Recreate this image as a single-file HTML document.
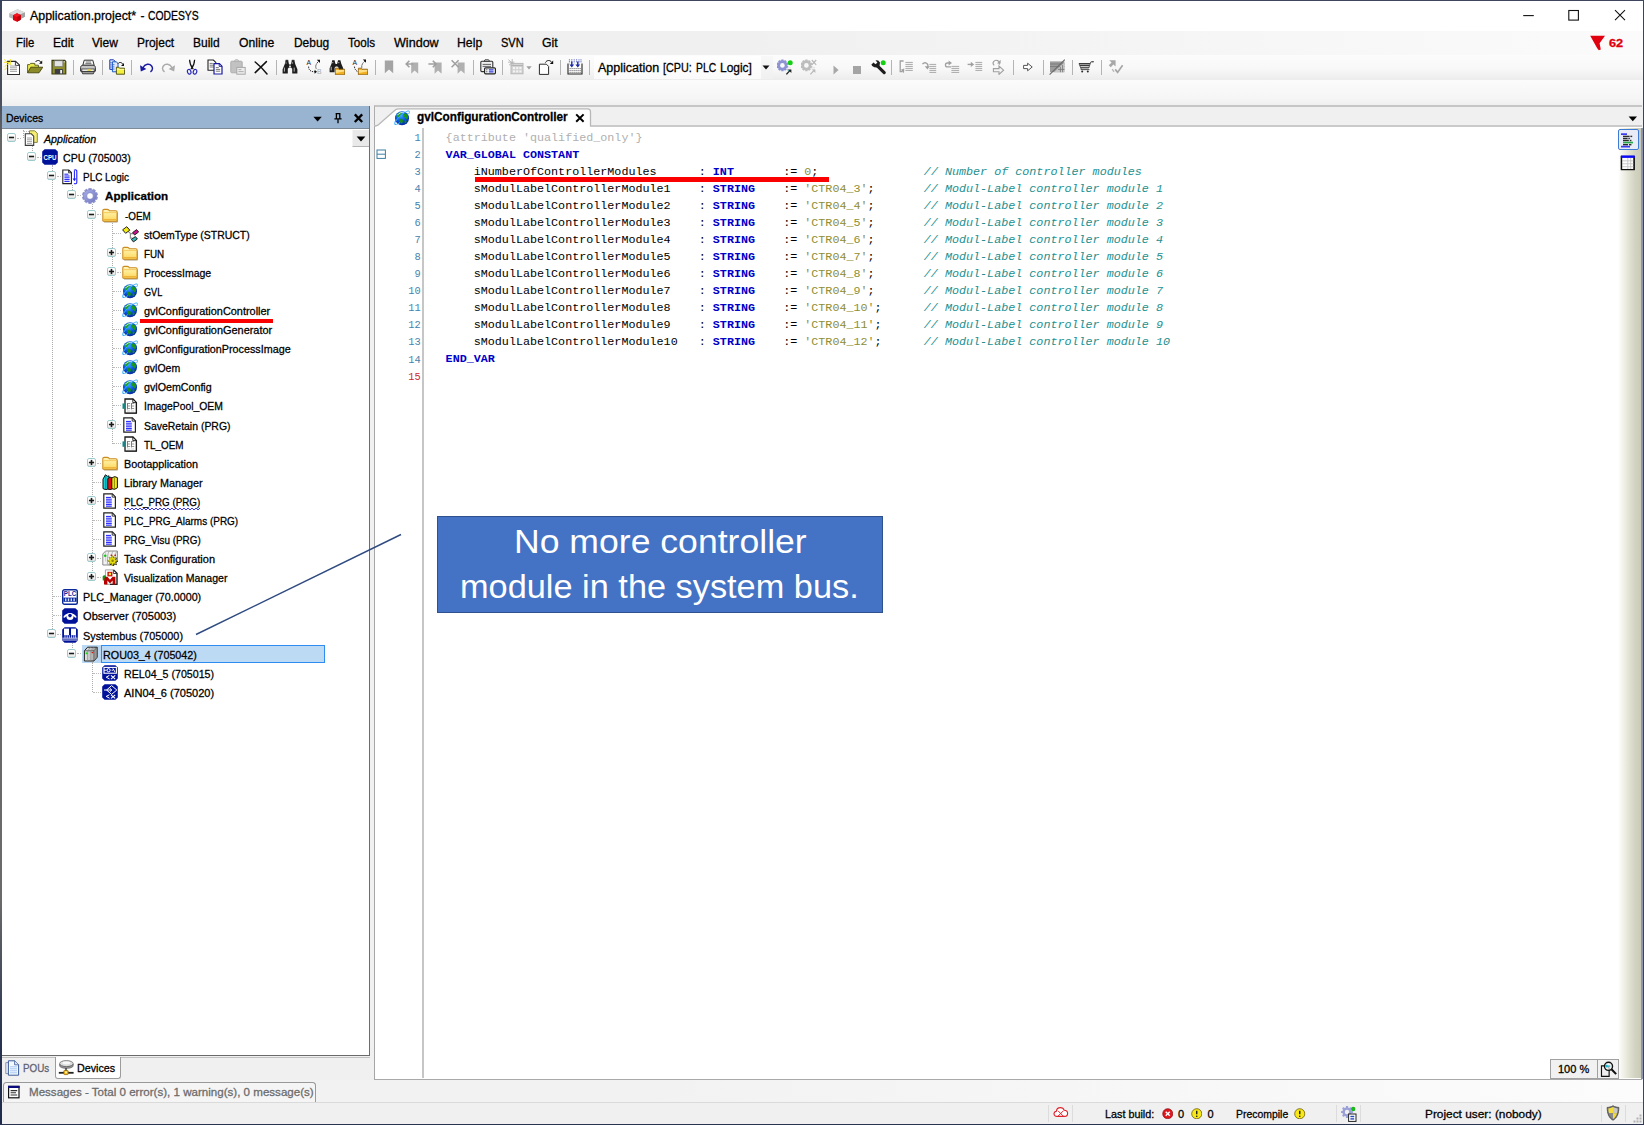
<!DOCTYPE html>
<html lang="en">
<head>
<meta charset="utf-8">
<title>Application.project* - CODESYS</title>
<style>
html,body{margin:0;padding:0;}
body{width:1644px;height:1125px;overflow:hidden;background:#f0f0f0;position:relative;font-family:"Liberation Sans",sans-serif;}
#win{position:absolute;left:0;top:0;width:1644px;height:1125px;overflow:hidden;background:#f0f0f0;}
.a{position:absolute;}
.t{position:absolute;white-space:pre;transform-origin:0 50%;-webkit-text-stroke:0.280px currentColor;line-height:20px;height:20px;font-family:"Liberation Sans",sans-serif;}
.ic{position:absolute;width:16px;height:16px;overflow:visible;}
.sep{position:absolute;width:1px;height:15px;top:60px;background:#b4b4b4;}
.code{position:absolute;white-space:pre;font-family:"Liberation Mono",monospace;font-size:11.72px;line-height:18px;height:18px;left:445.6px;color:#000;}
.ln{position:absolute;white-space:pre;font-family:"Liberation Mono",monospace;font-size:10.300px;line-height:18px;height:18px;width:40px;left:380.600px;text-align:right;color:#4683ad;}
.kw{color:#0000c8;font-weight:bold;}
.st{color:#8e8e34;}
.cm{color:#23908f;font-style:italic;}
.at{color:#b0b0b0;}
.xb{position:absolute;width:7px;height:7px;border:1px solid #9bcacd;border-radius:2px;background:linear-gradient(#fff 0%,#fff 50%,#dedede 100%);box-sizing:content-box;}
.xb:before{content:"";position:absolute;left:0.900px;top:2.600px;width:5.400px;height:1.800px;background:#1a1a1a;}
.xb.p:after{content:"";position:absolute;left:2.700px;top:0.800px;width:1.800px;height:5.400px;background:#1a1a1a;}
.hl{position:absolute;height:0;border-top:1px dotted #bcbcbc;}
.vl{position:absolute;width:0;border-left:1px dotted #acacac;}
</style>
</head>
<body>
<div id="win">
<svg width="0" height="0" style="position:absolute;left:-10px;top:-10px;overflow:hidden">
<defs>
<linearGradient id="gFold" x1="0" y1="0" x2="0" y2="1"><stop offset="0" stop-color="#fff6bc"/><stop offset="0.5" stop-color="#ffe98c"/><stop offset="1" stop-color="#fbd35a"/></linearGradient>
<radialGradient id="gGlobe" cx="0.42" cy="0.32" r="0.75"><stop offset="0" stop-color="#3aa0ff"/><stop offset="0.5" stop-color="#0a58e0"/><stop offset="1" stop-color="#04208a"/></radialGradient>
<linearGradient id="gGear" x1="0" y1="0" x2="1" y2="1"><stop offset="0" stop-color="#a9aee6"/><stop offset="1" stop-color="#7479c2"/></linearGradient>
<linearGradient id="gRou" x1="0" y1="0" x2="1" y2="0"><stop offset="0" stop-color="#e6e6e6"/><stop offset="1" stop-color="#9c9c9c"/></linearGradient>
<linearGradient id="gShield" x1="0" y1="0" x2="1" y2="0"><stop offset="0" stop-color="#8a8a8a"/><stop offset="1" stop-color="#555"/></linearGradient>

<linearGradient id="gXb" x1="0" y1="0" x2="0" y2="1"><stop offset="0" stop-color="#fff"/><stop offset="0.55" stop-color="#fff"/><stop offset="1" stop-color="#d6d6d6"/></linearGradient>
<symbol id="x-minus" viewBox="0 0 9 9">
 <rect x="0.500" y="0.500" width="8" height="8" rx="1.600" fill="url(#gXb)" stroke="#9bcacd" stroke-width="1"/>
 <rect x="1.900" y="3.700" width="5.200" height="1.600" fill="#1a1a1a"/>
</symbol>
<symbol id="x-plus" viewBox="0 0 9 9">
 <rect x="0.500" y="0.500" width="8" height="8" rx="1.600" fill="url(#gXb)" stroke="#9bcacd" stroke-width="1"/>
 <rect x="1.900" y="3.700" width="5.200" height="1.600" fill="#1a1a1a"/>
 <rect x="3.700" y="1.900" width="1.600" height="5.200" fill="#1a1a1a"/>
</symbol>
<!-- title logo -->
<symbol id="i-logo" viewBox="0 0 18 18">
 <path d="M1.200 6.200 L9.600 2.200 17 5.400 17 9.800 9 13.400 1.200 10.200Z" fill="#b4b4b4"/>
 <path d="M1.200 6.200 L9.600 2.200 17 5.400 8.800 9Z" fill="#dcdcdc"/>
 <path d="M8.800 9 L17 5.400 17 9.800 9 13.400Z" fill="#a2a2a2"/>
 <path d="M5 8.200 L9 6.200 12.800 8 12.800 12.800 9 14.800 5 13Z" fill="#e2000f"/>
 <path d="M5 8.200 L9 6.200 12.800 8 9 10Z" fill="#f21822"/>
 <path d="M9 10 L12.800 8 12.800 12.800 9 14.800Z" fill="#bc000a"/>
</symbol>

<!-- ===== tree icons ===== -->
<symbol id="i-project" viewBox="0 0 16 16">
 <path d="M6.5 0.8h5.2l2.6 2.4v9.2H6.5Z" fill="#f6ee70" stroke="#7a7a40" stroke-width="0.9"/>
 <path d="M2.3 3.8h6l2.4 2.4v9.2H2.3Z" fill="#fff" stroke="#3c3c3c" stroke-width="1.1"/>
 <path d="M4 8h5M4 9.8h5M4 11.6h5M4 13.4h5" stroke="#9a9a9a" stroke-width="0.9"/>
</symbol>
<symbol id="i-cpu" viewBox="0 0 16 16">
 <path d="M2.6 0.2h10.8l2.4 2.4v10.8l-2.4 2.4H2.6l-2.4-2.4V2.6Z" fill="#00129a"/>
 <text x="8" y="11" font-family="Liberation Sans, sans-serif" font-size="7.2" font-weight="bold" fill="#fff" text-anchor="middle" textLength="13" lengthAdjust="spacingAndGlyphs">CPU</text>
</symbol>
<symbol id="i-plclogic" viewBox="0 0 16 16">
 <path d="M0.8 1h6l2.6 2.6v11H0.8Z" fill="#fff" stroke="#222" stroke-width="1.1"/>
 <path d="M6.6 1v2.8h2.8" fill="none" stroke="#222" stroke-width="0.9"/>
 <path d="M2.4 5.2h4M2.4 7h5.2M2.4 8.8h5.2M2.4 10.6h5.2M2.4 12.4h5.2" stroke="#1a1aff" stroke-width="1"/>
 <path d="M12 1.2c1.6-0.8 2.8-0.2 2.8 0.8v11.6c0 1.2-1.4 1.6-2.8 0.8" fill="none" stroke="#1a1aff" stroke-width="1.1"/>
 <path d="M12.4 1.6v9" stroke="#1a1aff" stroke-width="1"/>
 <path d="M10.6 9.6h3.6l-1.8 2.6Z" fill="#1a1aff"/>
</symbol>
<symbol id="i-gear" viewBox="0 0 16 16">
 <g fill="url(#gGear)" stroke="#6d72b8" stroke-width="0.400">
  <path id="gtooth" d="M6.700 0.300h2.600l0.300 2.400h-3.200Z"/><use href="#gtooth" transform="rotate(36 8 8)"/><use href="#gtooth" transform="rotate(72 8 8)"/><use href="#gtooth" transform="rotate(108 8 8)"/><use href="#gtooth" transform="rotate(144 8 8)"/><use href="#gtooth" transform="rotate(180 8 8)"/><use href="#gtooth" transform="rotate(216 8 8)"/><use href="#gtooth" transform="rotate(252 8 8)"/><use href="#gtooth" transform="rotate(288 8 8)"/><use href="#gtooth" transform="rotate(324 8 8)"/>
  <circle cx="8" cy="8" r="6.300"/>
 </g>
 <circle cx="8" cy="8" r="6.100" fill="url(#gGear)"/>
 <circle cx="8" cy="8" r="3.300" fill="#fff" stroke="#6d72b8" stroke-width="0.600"/>
</symbol>
<symbol id="i-folder" viewBox="0 0 16 16">
 <path d="M1.300 13.800V4.600c0-0.900 0.500-1.400 1.300-1.400h3c0.800 0 1.200 0.300 1.600 0.800l0.500 0.600h6.400c0.800 0 1.300 0.500 1.300 1.300v7.900c0 0.700-0.400 1-1.100 1H2.400c-0.700 0-1.100-0.300-1.100-1Z" fill="#6e5a2a" opacity="0.600" transform="translate(0.500 0.700)"/>
 <path d="M0.800 13.200V3.800c0-0.900 0.500-1.400 1.300-1.400h3.200c0.800 0 1.200 0.300 1.600 0.800l0.500 0.600h6.400c0.800 0 1.300 0.500 1.300 1.300v8.100c0 0.700-0.400 1-1.100 1H1.900c-0.700 0-1.100-0.300-1.100-1Z" fill="url(#gFold)" stroke="#cb8c22" stroke-width="1.100"/>
 <path d="M1.400 5.600h13.200" stroke="#f0c050" stroke-width="0.800"/>
 <path d="M1.600 12.600h12.800" stroke="#efb538" stroke-width="1.200"/>
</symbol>
<symbol id="i-struct" viewBox="0 0 16 16" overflow="visible">
 <path d="M6.200 5.400 L8.400 7.400 V12.200 H10.600 M8.400 7.600 H11" fill="none" stroke="#8e8e8e" stroke-width="1.200"/>
 <path d="M0.600 3.800 L4.800 0.700 7.800 4.200 3.600 7.300Z" fill="#f4ec10" stroke="#222" stroke-width="1"/>
 <path d="M10.600 6.600 L14.600 3.600 16.600 6 12.600 9Z" fill="#c8108a" stroke="#222" stroke-width="1"/>
 <path d="M9.400 13.400 L13.400 10.600 15.400 13 11.400 15.900Z" fill="#30b8c0" stroke="#222" stroke-width="1"/>
</symbol>
<symbol id="i-globe" viewBox="0 0 16 16">
 <path d="M2.400 14.400C0.400 15.200 0.200 13 2 10.400" stroke="#38b0ff" stroke-width="1.100" fill="none"/>
 <circle cx="8" cy="8.300" r="7" fill="url(#gGlobe)"/>
 <path d="M2.600 5.600c0.800-1.800 2.600-3.200 4.400-3.600 1 0.200 0.800 1.200 0 1.800-0.600 0.600-0.200 1.600-1.200 2.400-0.600 0.600-1 1.800-2 1.600-0.800-0.400-1.400-1.200-1.200-2.200Z" fill="#1fa51f"/>
 <path d="M9.800 3.200c1.400-0.200 3 0.800 3.800 2.200 0.600 1.400 0.400 3.200-0.600 3.800-0.800 0.200-1.200-1-2-1.600-1-0.800-1.800-1.600-1.600-2.800 0-0.600 0-1.200 0.400-1.600Z" fill="#1a9a1a"/>
 <path d="M5.800 9c1-0.600 2.400-0.200 3 1 0.400 1.200-0.200 2.800-1.200 3.400-1-0.200-1.400-1.200-1.800-2.200-0.400-0.800-0.600-1.600 0-2.200Z" fill="#169016"/>
 <path d="M11 10.800c0.600-0.400 1.600-0.200 1.600 0.800 0 0.800-0.800 1.800-1.600 1.600-0.600-0.600-0.600-1.800 0-2.400Z" fill="#148a14"/>
 <path d="M3.400 5.200C5.200 2.800 7.800 2 10 2.800" stroke="#e8f4ff" stroke-width="1" fill="none" opacity="0.900"/>
 <path d="M1.800 11C4 7.600 8.400 3.600 12.400 1.600c2-1 3.600-0.800 3 0.800-0.200 0.600-0.600 1.200-1 1.800" stroke="#38b0ff" stroke-width="1" fill="none"/>
 <path d="M2.400 14.400c1.200-0.400 2.400-1 3.600-1.800" stroke="#38b0ff" stroke-width="1" fill="none"/>
</symbol>
<symbol id="i-imgpool" viewBox="0 0 16 16">
 <path d="M3 1h8l3.400 3.400v10.800H3Z" fill="#fff" stroke="#1a1a1a" stroke-width="1.300"/>
 <path d="M3.600 15.200h10.800V5" fill="none" stroke="#1a1a1a" stroke-width="0.700"/>
 <path d="M10.800 1v3.600h3.600" fill="none" stroke="#1a1a1a" stroke-width="0.900"/>
 <rect x="0.500" y="5.400" width="2.400" height="5.400" fill="#148888"/>
 <g stroke="#7a7a7a" stroke-width="1"><path d="M5.500 5v6.400M9.500 5v6.400"/></g>
 <g stroke="#8e8e8e" stroke-width="0.900"><path d="M5.500 5.500h2.700M5.500 8h2.700M5.500 10.500h2.700M9.500 5.500h2.700M9.500 8h2.700M9.500 10.500h2.700"/></g>
 <g stroke="#c4c4c4" stroke-width="0.800"><path d="M5 13h3.200M9 13h3.200"/></g>
</symbol>
<symbol id="i-prg" viewBox="0 0 16 16">
 <path d="M1.8 0.9h8.6l3 3v11.2H1.8Z" fill="#fff" stroke="#222" stroke-width="1.2"/>
 <path d="M10.2 0.9v3.2h3.2" fill="none" stroke="#222" stroke-width="0.9"/>
 <path d="M4 4.4h5M4 6.2h5.8M4 8h5.8M4 9.8h5.8M4 11.6h5.8M4 13.2h5.8" stroke="#1a1aff" stroke-width="1"/>
</symbol>
<symbol id="i-libmgr" viewBox="0 0 16 16">
 <path d="M1 5.200L3.400 0.800l2.400 1.600 1.200-0.600v12.600l-3 1.400-3-1.200Z" fill="#18d0d8" stroke="#111" stroke-width="1"/>
 <path d="M3.800 1.200v14" stroke="#0a6a70" stroke-width="0.800"/>
 <path d="M5.800 4.600l2.400-1.400 2.200 0.800v10.800l-2.400 1-2.200-0.800Z" fill="#e01010" stroke="#111" stroke-width="1"/>
 <path d="M9.800 4l2.800-1.400 2.800 1v10.200l-3 1.600-2.600-0.800Z" fill="#f4e810" stroke="#111" stroke-width="1"/>
 <path d="M12.400 3.200v12" stroke="#7a7400" stroke-width="0.800"/>
</symbol>
<symbol id="i-taskcfg" viewBox="0 0 16 16">
 <path d="M0.800 4L3.600 1H15.400V11.400L12.400 15H0.800Z" fill="#f2f2f2" stroke="#8a8a8a" stroke-width="1"/>
 <path d="M3.600 1v10.400M0.800 4" stroke="#bbb" stroke-width="0.700" fill="none"/>
 <path d="M7.400 1C6 3 5.400 5 5.400 14.600M11.200 1C9.800 3 9.200 5 9.200 14.600M15 1.400C13.400 3 12.800 5 12.800 14.400" stroke="#9a9a9a" stroke-width="0.800" fill="none"/>
 <circle cx="3.200" cy="5.800" r="1.300" fill="#18c818"/>
 <rect x="8.600" y="4.600" width="1.600" height="1.400" fill="#c02020"/><rect x="12.400" y="4.600" width="1.600" height="1.400" fill="#c02020"/>
 <path d="M10.60 5.50 L11.71 8.12 L14.35 7.05 L13.28 9.69 L15.90 10.80 L13.28 11.91 L14.35 14.55 L11.71 13.48 L10.60 16.10 L9.49 13.48 L6.85 14.55 L7.92 11.91 L5.30 10.80 L7.92 9.69 L6.85 7.05 L9.49 8.12Z" fill="#1a1a1a" transform="translate(0.700 0.700)"/>
 <path d="M10.60 5.50 L11.71 8.12 L14.35 7.05 L13.28 9.69 L15.90 10.80 L13.28 11.91 L14.35 14.55 L11.71 13.48 L10.60 16.10 L9.49 13.48 L6.85 14.55 L7.92 11.91 L5.30 10.80 L7.92 9.69 L6.85 7.05 L9.49 8.12Z" fill="#e4dc10" stroke="#6a6400" stroke-width="0.400"/>
 <circle cx="10.600" cy="10.800" r="1.200" fill="#8a8400"/>
</symbol>
<symbol id="i-vismgr" viewBox="0 0 16 16">
 <path d="M3.400 0.900h8.200l3.400 3.400v11H3.400Z" fill="#fff" stroke="#9a9a9a" stroke-width="0.900"/>
 <path d="M11.600 0.900l3.400 3.400v11H8" fill="none" stroke="#222" stroke-width="1.300"/>
 <path d="M11.400 0.900v3.600h3.600" fill="none" stroke="#333" stroke-width="0.900"/>
 <rect x="5.400" y="2.800" width="5" height="4.600" fill="#c81010"/>
 <rect x="6.800" y="3.800" width="2.200" height="2.400" fill="#ffe428"/>
 <path d="M2 7.800h3.400l2.600 3 2.600-3h2.800V15.600h-2.800v-4l-2.600 2.800-2.600-2.800v4H2Z" fill="#b80000"/>
 <path d="M0.600 7.400c0.800-1.200 2.600-1.400 3.600-0.400L2.400 9.600v2H0.800Z" fill="#169016"/>
</symbol>
<symbol id="i-plcmgr" viewBox="0 0 16 16">
 <rect x="0.7" y="0.7" width="14.6" height="14.6" rx="1.8" fill="#fff" stroke="#0a2a9a" stroke-width="1.4"/>
 <text x="8" y="7.2" font-family="Liberation Sans, sans-serif" font-size="6.6" font-weight="bold" fill="#0a2a9a" text-anchor="middle" textLength="12.4" lengthAdjust="spacingAndGlyphs">PLC</text>
 <rect x="1.4" y="8.6" width="13.2" height="4.2" fill="#0a2a9a"/>
 <g fill="#cfd8ff"><rect x="3" y="9.4" width="1.4" height="2.8"/><rect x="5.8" y="9.4" width="1.4" height="2.8"/><rect x="8.6" y="9.4" width="1.4" height="2.8"/><rect x="11.4" y="9.4" width="1.4" height="2.8"/></g>
</symbol>
<symbol id="i-observer" viewBox="0 0 16 16">
 <path d="M2.600 0.200h10.800l2.400 2.400v10.800l-2.400 2.400H2.600l-2.400-2.400V2.600Z" fill="#00129a"/>
 <path d="M1.200 9.200C3.600 4 12.400 4 14.800 9.200L13.200 9.800C11.400 6.600 4.600 6.600 2.800 9.800Z" fill="#fff"/>
 <circle cx="8" cy="8.400" r="3.500" fill="#fff"/>
 <circle cx="8" cy="7.600" r="1.800" fill="#00129a"/>
</symbol>
<symbol id="i-sysbus" viewBox="0 0 16 16">
 <path d="M2.6 0.2h10.8l2.400 2.400v10.800l-2.400 2.400H2.600l-2.400-2.400V2.600Z" fill="#00129a"/>
 <rect x="2" y="1.6" width="5" height="6.600" fill="#fff"/><rect x="9" y="1.600" width="5" height="6.600" fill="#fff"/>
 <g stroke="#cfd8ff" stroke-width="0.9"><path d="M3 8.200v3M5.200 8.200v3M7.400 8.200v3M9.600 8.200v3M11.800 8.200v3M13.600 8.200v3"/></g>
 <path d="M0.400 11.200h15.200M0.400 13h15.200" stroke="#fff" stroke-width="0.8"/>
</symbol>
<symbol id="i-rou" viewBox="0 0 16 16">
 <path d="M2.400 4.800L5.600 1.200H15.200V11.200L12 15H2.400Z" fill="url(#gRou)" stroke="#222" stroke-width="1"/>
 <path d="M2.400 4.800H12V15M12 4.800L15.200 1.200" fill="none" stroke="#444" stroke-width="0.800"/>
 <path d="M5.600 4.800V15M8.800 4.800V15M8.800 1.200L5.600 4.800M12 1.200L8.800 4.800" stroke="#8a8a8a" stroke-width="0.700" fill="none"/>
 <path d="M12 4.800L15.200 1.200V11.200L12 15Z" fill="#8a8a8a" opacity="0.550"/>
 <rect x="3.600" y="6.400" width="2" height="1.800" fill="#18d818"/>
 <rect x="9.600" y="6" width="1.800" height="1.200" fill="#d81818"/>
</symbol>
<symbol id="i-rel" viewBox="0 0 16 16">
 <path d="M2.600 0.200h10.800l2.400 2.400v10.800l-2.400 2.400H2.600l-2.400-2.400V2.600Z" fill="#00129a"/>
 <rect x="2" y="2.400" width="12.400" height="5.800" fill="none" stroke="#fff" stroke-width="1.100"/>
 <path d="M2 5.200h2.600M9.600 5.200h1.400M10.800 3.400l2.200 3.600" stroke="#fff" stroke-width="1" fill="none"/>
 <circle cx="6.600" cy="5.200" r="1.600" fill="none" stroke="#fff" stroke-width="1"/>
 <path d="M7.400 10.400L4.200 12.200l3.400 1.800" stroke="#fff" stroke-width="1" fill="none"/>
 <path d="M9 10.400l4.200 3.800M13.200 10.400L9 14.200" stroke="#fff" stroke-width="1.100" fill="none"/>
</symbol>
<symbol id="i-ain" viewBox="0 0 16 16">
 <path d="M2.600 0.200h10.800l2.400 2.400v10.800l-2.400 2.400H2.600l-2.400-2.400V2.600Z" fill="#00129a"/>
 <path d="M9.600 1.600L14.800 6 9.600 10.400 4.600 6Z" fill="none" stroke="#fff" stroke-width="1"/>
 <path d="M2 6h7.600M7.600 4l2.200 2-2.200 2" stroke="#fff" stroke-width="1" fill="none"/>
 <path d="M7.400 10.800L4.200 12.400l3.400 1.800" stroke="#fff" stroke-width="1" fill="none"/>
 <path d="M9 10.800l4.200 3.600M13.200 10.800L9 14.400" stroke="#fff" stroke-width="1.100" fill="none"/>
</symbol>

<!-- ===== misc icons ===== -->
<symbol id="i-pou" viewBox="0 0 16 16">
 <path d="M0.800 2.600h6l3 3v8H0.800Z" fill="#e8f0fb" stroke="#7a8aa6" stroke-width="0.900"/>
 <path d="M3.400 0.800h6.400l3.800 3.800v10.600H3.400Z" fill="#f4f9ff" stroke="#3a5a9a" stroke-width="1"/>
 <path d="M9.600 0.800v4h4" fill="#dbe8fa" stroke="#3a5a9a" stroke-width="0.800"/>
 <path d="M5 6.800h7M5 8.800h7M5 10.800h7M5 12.800h7" stroke="#9cc4f0" stroke-width="0.900"/>
</symbol>
<symbol id="i-devtab" viewBox="0 0 16 16">
 <ellipse cx="8.400" cy="3.600" rx="6.800" ry="3" fill="#dcdcdc" stroke="#6a6a6a" stroke-width="0.800"/>
 <ellipse cx="8.400" cy="3" rx="4" ry="1.400" fill="#f8f8f8"/>
 <path d="M1.600 4.200c0 3.400 13.600 3.400 13.600 0v1.600c0 3.400-13.600 3.400-13.600 0Z" fill="#9a9a9a" stroke="#555" stroke-width="0.600"/>
 <path d="M8 8v3" stroke="#333" stroke-width="1.400"/>
 <path d="M0.800 12.800h14.800" stroke="#222" stroke-width="1.800"/>
 <rect x="5.800" y="10.400" width="4.400" height="4.200" rx="0.800" fill="#f0b818" stroke="#8a5a00" stroke-width="0.700"/>
 <rect x="7" y="11.400" width="2" height="1.800" fill="#fff2a8"/>
</symbol>
<symbol id="i-msg" viewBox="0 0 16 16">
 <rect x="2.600" y="2.400" width="10.400" height="11.400" fill="#fff" stroke="#111" stroke-width="1.200"/>
 <rect x="2" y="1.800" width="11.600" height="2.200" fill="#0a0a7a"/>
 <path d="M4.600 6.600h6.600M4.600 8.800h5.400M4.600 11h6.600" stroke="#333" stroke-width="1.100"/>
</symbol>
<symbol id="i-cloud" viewBox="0 0 16 16">
 <path d="M4 12.400c-1.800 0-3-1.200-3-2.600 0-1.400 1-2.400 2.400-2.600 0.200-2 1.800-3.600 4-3.600 1.800 0 3.200 1 3.800 2.600 2 0 3.400 1.400 3.400 3.200 0 1.600-1.400 3-3.200 3Z" fill="#fff" stroke="#e0202a" stroke-width="1.100"/>
 <path d="M5 6.800l5.400 5.400M10.400 6.800L5 12.200" stroke="#e0202a" stroke-width="1"/>
</symbol>
<symbol id="i-err" viewBox="0 0 13 13">
 <circle cx="6.500" cy="6.500" r="5.700" fill="#e0161e" stroke="#8a0a10" stroke-width="0.800"/>
 <path d="M4.200 4.200l4.600 4.600M8.800 4.200l-4.600 4.600" stroke="#fff" stroke-width="1.600"/>
</symbol>
<symbol id="i-warn" viewBox="0 0 13 13">
 <circle cx="6.500" cy="6.500" r="5.700" fill="#f8e818" stroke="#6a5a00" stroke-width="0.900"/>
 <path d="M6.500 3v4.200" stroke="#111" stroke-width="1.500"/><circle cx="6.500" cy="9.400" r="0.900" fill="#111"/>
</symbol>
<symbol id="i-stgear" viewBox="0 0 16 16">
 <g fill="#9aa0d8"><circle cx="6" cy="6" r="4.600"/><g id="gt2"><rect x="4.900" y="0" width="2.200" height="12" rx="0.500"/></g><use href="#gt2" transform="rotate(45 6 6)"/><use href="#gt2" transform="rotate(90 6 6)"/><use href="#gt2" transform="rotate(135 6 6)"/></g>
 <circle cx="6" cy="6" r="2.200" fill="#f0f0f0"/>
 <circle cx="12.200" cy="3" r="2.200" fill="#18b818"/>
 <rect x="7.600" y="8" width="7.400" height="7.400" fill="#fff" stroke="#222" stroke-width="1"/>
 <rect x="9.400" y="9.800" width="3.800" height="1.400" fill="#2a4ab8"/><rect x="9.400" y="12.200" width="3.800" height="1.400" fill="#2a4ab8"/>
</symbol>
<symbol id="i-shield" viewBox="0 0 16 16">
 <path d="M8 0.800c2 1.200 4 1.600 5.800 1.600 0 6-1.600 10.400-5.800 12.800C3.800 12.800 2.200 8.400 2.200 2.400 4 2.400 6 2 8 0.800Z" fill="#777" stroke="#4a4a4a" stroke-width="0.900"/>
 <path d="M8 2c-1.400 0.800-3 1.200-4.600 1.400 0 1.800 0.200 3.400 0.600 4.800H8Z" fill="#f6dc3a"/>
 <path d="M8 2c1.400 0.800 3 1.200 4.600 1.400 0 1.800-0.200 3.400-0.600 4.800H8Z" fill="#c8c8c8"/>
 <path d="M8 8.200H4c0.800 2.600 2 4.400 4 5.800Z" fill="#8a8a8a"/>
 <path d="M8 8.200h4c-0.800 2.600-2 4.400-4 5.800Z" fill="#f6dc3a"/>
</symbol>
<symbol id="i-zoom" viewBox="0 0 16 16">
 <path d="M1.400 4.600h5.200l2 2v7.800H1.400Z" fill="#eee" stroke="#111" stroke-width="1.100"/>
 <circle cx="8" cy="5" r="3.800" fill="#f4f4f4" fill-opacity="0.7" stroke="#111" stroke-width="1.300"/>
 <path d="M10.800 7.800l4.400 4.600" stroke="#111" stroke-width="1.900"/>
 <path d="M5.600 4.800h4M6.800 3.600l-1.200 1.200 1.200 1.200" stroke="#18b8d0" stroke-width="1" fill="none"/>
</symbol>
<symbol id="i-textview" viewBox="0 0 16 16">
 <rect x="1" y="1.300" width="6" height="1.700" fill="#3a3af0"/>
 <g fill="#2a2a2a"><rect x="3" y="3.700" width="6.600" height="1.400"/><rect x="10.400" y="3.700" width="1.800" height="1.400"/>
 <rect x="3" y="5.800" width="4.600" height="1.400"/><rect x="8.400" y="5.800" width="1.400" height="1.400"/>
 <rect x="3" y="7.800" width="5.800" height="1.400"/><rect x="9.800" y="7.800" width="1.600" height="1.400"/>
 <rect x="3" y="12" width="5" height="1.400"/><rect x="9" y="12" width="2.400" height="1.400"/></g>
 <rect x="3" y="9.700" width="10" height="1.700" fill="#2aa84a"/>
 <rect x="1" y="13.800" width="9" height="1.700" fill="#3a3af0"/>
</symbol>
<symbol id="i-tableview" viewBox="0 0 16 16">
 <rect x="1.500" y="1.600" width="13" height="13.400" fill="#fff" stroke="#111" stroke-width="1.300"/>
 <path d="M1.500 6h13M1.500 9h13M1.500 12h13M8 3v12M11 3v12" stroke="#c4c4c4" stroke-width="0.900"/>
 <rect x="1.500" y="1.600" width="13" height="13.400" fill="none" stroke="#111" stroke-width="1.300"/>
 <rect x="0.900" y="0.500" width="14.200" height="2.400" fill="#0a0aff"/>
</symbol>
<!-- ===== toolbar icons ===== -->
<symbol id="t-new" viewBox="0 0 16 16">
 <path d="M3.6 2.400h8l4 3.800v9.400H3.600Z" fill="#fff" stroke="#2a2a2a" stroke-width="1.100"/>
 <path d="M11.400 2.400v4h4" fill="none" stroke="#2a2a2a" stroke-width="0.900"/>
 <path d="M6 7h7M6 8.800h7M6 10.600h7M6 12.400h7" stroke="#9a9a9a" stroke-width="0.900"/>
 <path d="M0.200 0.400l5.600 5.200M6.400 0v6M0 3.400h6M0.600 7.600l4.400-3.600M0.600 10.600l2.600-2" stroke="#f0e020" stroke-width="0.900"/>
</symbol>
<symbol id="t-open" viewBox="0 0 16 16">
 <path d="M0.600 13.800V5.600h2l1-1.200h4.200v1.800h3.600v2" fill="#e8e850" stroke="#55551a" stroke-width="0.900"/>
 <path d="M0.600 13.800L3.800 8.200H15.800L12 13.800Z" fill="#8a8a28" stroke="#44440f" stroke-width="0.900"/>
 <path d="M8.400 3c1.600-2.200 4.600-2 5.600 0.600" fill="none" stroke="#111" stroke-width="1"/>
 <path d="M15.200 1.600v3.200h-3.200Z" fill="#111"/>
</symbol>
<symbol id="t-save" viewBox="0 0 16 16">
 <path d="M1 1.400h12.800l1 1V15H1Z" fill="#8e8e2e" stroke="#3a3a10" stroke-width="1.100"/>
 <rect x="3.400" y="1.800" width="8.400" height="5.600" fill="#e2e2e2" stroke="#777" stroke-width="0.600"/>
 <rect x="3.800" y="10" width="8" height="5" fill="#3c3c44"/>
 <rect x="9.200" y="11" width="1.800" height="3.400" fill="#f0f0f0"/>
 <rect x="12.800" y="2.200" width="1" height="1.200" fill="#e8e8e8"/>
</symbol>
<symbol id="t-print" viewBox="0 0 16 16">
 <path d="M4.200 1.200h8.600l1.400 5.200H2.800Z" fill="#f4f4f4" stroke="#333" stroke-width="1"/>
 <path d="M5.800 3h5.200M5.400 4.600h6" stroke="#555" stroke-width="0.800"/>
 <path d="M0.600 8.600c0-1.400 1-2.400 2.400-2.400h10c1.400 0 2.400 1 2.400 2.400v3.600H0.600Z" fill="#c4c4c4" stroke="#333" stroke-width="1"/>
 <rect x="1.800" y="10" width="12.400" height="2.400" fill="#fff" stroke="#333" stroke-width="0.800"/>
 <rect x="7.400" y="10.400" width="3.400" height="1.400" fill="#f0e020"/>
 <path d="M1.600 12.400h12.800l-1 2.400H2.600Z" fill="#9a9a9a" stroke="#333" stroke-width="0.900"/>
</symbol>
<symbol id="t-copyfolder" viewBox="0 0 16 16">
 <path d="M0.800 0.800h3.800l1.600 1.600v8H0.800Z" fill="#dfe8ff" stroke="#1a3ab0" stroke-width="1"/>
 <path d="M3.400 2.800h3.800l1.800 1.600v8.400H3.400Z" fill="#dfe8ff" stroke="#1a5ac8" stroke-width="1"/>
 <path d="M2 3v6M4.800 5v6" stroke="#1a3ab0" stroke-width="0.900" stroke-dasharray="0.9 0.9"/>
 <path d="M7.400 8.200h2.400l0.800 1h5v6H7.400Z" fill="#f4f040" stroke="#55551a" stroke-width="1"/>
 <path d="M7.800 10.400h7.600" stroke="#fbfba0" stroke-width="1"/>
 <path d="M9 4.600c1.400-1.800 4-1.400 4.800 0.800" fill="none" stroke="#111" stroke-width="1"/>
 <path d="M15 4v3h-3Z" fill="#111"/>
</symbol>
<symbol id="t-undo" viewBox="0 0 16 16">
 <path d="M4.800 9C7 4.600 11.600 4.200 13.600 7c1.400 2.200 0.600 4.600-1.200 5.800" fill="none" stroke="#1a1aa0" stroke-width="1.400"/>
 <path d="M2 6.200l0.800 6.200 5.600-2.400Z" fill="#1a1aa0"/>
</symbol>
<symbol id="t-redo" viewBox="0 0 16 16">
 <path d="M11.200 9C9 4.600 4.400 4.200 2.400 7 1 9.200 1.800 11.600 3.600 12.800" fill="none" stroke="#ababab" stroke-width="1.400"/>
 <path d="M14 6.200l-0.800 6.200-5.600-2.400Z" fill="#ababab"/>
</symbol>
<symbol id="t-cut" viewBox="0 0 16 16">
 <path d="M5.600 0.800c0 3.600 1 6.200 3.600 9.400M10.600 0.800c0 3.600-1 6.200-3.600 9.400" fill="none" stroke="#111" stroke-width="1.200"/>
 <ellipse cx="5.200" cy="12.800" rx="1.700" ry="2.400" fill="none" stroke="#2828b8" stroke-width="1.200" transform="rotate(-18 5.200 12.800)"/>
 <ellipse cx="11" cy="12.800" rx="1.700" ry="2.400" fill="none" stroke="#2828b8" stroke-width="1.200" transform="rotate(18 11 12.800)"/>
</symbol>
<symbol id="t-copy" viewBox="0 0 16 16">
 <path d="M1 1h5.400l2.400 2.400v7.800H1Z" fill="#fff" stroke="#222" stroke-width="1.100"/>
 <path d="M2.600 4.400h3.200M2.600 6.200h4.200M2.600 8h4.200" stroke="#555" stroke-width="0.800"/>
 <path d="M7 4.600h5.400l2.600 2.600v7.800H7Z" fill="#fff" stroke="#1a1aa0" stroke-width="1.200"/>
 <path d="M12.200 4.600v2.800h2.800" fill="none" stroke="#1a1aa0" stroke-width="0.900"/>
 <path d="M8.800 8.600h3M8.800 10.400h4.400M8.800 12.200h4.400" stroke="#555" stroke-width="0.800"/>
</symbol>
<symbol id="t-paste" viewBox="0 0 16 16">
 <rect x="0.800" y="2.200" width="11.400" height="11.600" rx="1" fill="#c2c2c2" stroke="#adadad" stroke-width="1"/>
 <path d="M4 2.600l1.400-1.800h2.400l1.400 1.800Z" fill="#d8d8d8" stroke="#adadad" stroke-width="0.900"/>
 <rect x="6.800" y="8.400" width="8.400" height="6.800" fill="#ececec" stroke="#a8a8a8" stroke-width="1"/>
 <path d="M8.400 10.600h3M8.400 12.600h5.200" stroke="#a8a8a8" stroke-width="0.900"/>
</symbol>
<symbol id="t-del" viewBox="0 0 16 16">
 <path d="M2.200 3C6 6 10 10 14 15M13.400 2.600C10 6 6 10 2.200 13.600" fill="none" stroke="#111" stroke-width="1.500" stroke-linecap="round"/>
</symbol>
<symbol id="t-find" viewBox="0 0 16 16">
 <path d="M3.600 1.600h2.600l0.600 3 0.400 1h1.600l0.400-1 0.600-3h2.600l0.800 3.400 2.200 5.200v4.200H10.200V9.800L9 8.600H7L5.800 9.800v4.600H0.600v-4.200L2.800 5Z" fill="#1e1e1e"/>
 <rect x="3.600" y="0.800" width="2.600" height="1.400" fill="#333"/><rect x="9.800" y="0.800" width="2.600" height="1.400" fill="#333"/>
 <path d="M2.400 8.600v4M12.200 8.600v4M4 3.400v1.200M10.600 3.400v1.200" stroke="#c8c8c8" stroke-width="0.900"/>
 <rect x="7" y="6.600" width="2" height="1.600" fill="#cfcfcf"/>
</symbol>
<symbol id="t-replace" viewBox="0 0 16 16">
 <text x="0.400" y="6" font-family="Liberation Sans, sans-serif" font-size="6.800" fill="#222">A</text>
 <text x="11" y="15.200" font-family="Liberation Sans, sans-serif" font-size="6.800" fill="#a8a8a8">B</text>
 <path d="M2.600 7.600c0 3.600 2 5.200 6.400 5.200" fill="none" stroke="#222" stroke-width="1" stroke-dasharray="1.200 0.900"/>
 <path d="M8.600 10.800l2.400 2-2.400 2Z" fill="#111"/>
 <path d="M10.200 9.600c-1.200-2.400 0-5.200 2.800-7.600" fill="none" stroke="#222" stroke-width="1" stroke-dasharray="1.200 0.900"/>
 <path d="M10.800 0.800h3.200v3.200Z" fill="#111"/>
</symbol>
<symbol id="t-findfiles" viewBox="0 0 16 16">
 <path d="M3.200 1.200h2.400l0.600 2.800 0.400 1h1.400l0.400-1 0.600-2.800h2.400l0.800 3.200 2 4.800v4H9.600V8.800L8.400 7.600H6.800L5.600 8.800v4.400H0.600v-4L2.600 4.400Z" fill="#1e1e1e"/>
 <path d="M2.200 7.800v3.600M3.800 3v1.200M9.800 3v1.200" stroke="#c8c8c8" stroke-width="0.900"/>
 <path d="M6.400 9.200h2.800l0.800 1h5.600v5.600H6.400Z" fill="#f0b020" stroke="#8a5a10" stroke-width="0.800"/>
 <path d="M6.800 11h8.400v1.600L6.800 14Z" fill="#ffe89a" opacity="0.850"/>
</symbol>
<symbol id="t-replfiles" viewBox="0 0 16 16">
 <text x="0.400" y="6" font-family="Liberation Sans, sans-serif" font-size="6.800" fill="#222">A</text>
 <path d="M2.400 7.600c0.400 3 1.800 4.600 4.400 5.600" fill="none" stroke="#222" stroke-width="1" stroke-dasharray="1.200 0.900"/>
 <path d="M9.800 8.600c-0.400-2.400 0.800-4.600 3-6.600" fill="none" stroke="#222" stroke-width="1" stroke-dasharray="1.200 0.900"/>
 <path d="M10.800 0.600h3.200v3.200Z" fill="#111"/>
 <path d="M6.400 9.200h2.800l0.800 1h5.600v5.600H6.400Z" fill="#f0b020" stroke="#8a5a10" stroke-width="0.800"/>
 <path d="M6.800 11h8.400v1.600L6.800 14Z" fill="#ffe89a" opacity="0.850"/>
</symbol>
<symbol id="t-bm" viewBox="0 0 16 16">
 <path d="M3.800 1.600h8.400v12.600L8 10.600 3.800 14.200Z" fill="#a4a4a4"/>
</symbol>
<symbol id="t-bmprev" viewBox="0 0 16 16">
 <path d="M7.200 3.600h7v11.200L10.600 11.600 7.200 14.800Z" fill="#b0b0b0"/>
 <path d="M2.400 5h7M5.400 1.800L2.200 5l3.200 3.200" fill="none" stroke="#a0a0a0" stroke-width="1.600"/>
</symbol>
<symbol id="t-bmnext" viewBox="0 0 16 16">
 <path d="M7.600 3.600h7v11.200L11 11.600 7.600 14.800Z" fill="#b0b0b0"/>
 <path d="M1.400 5h7M5.800 1.800L9 5 5.800 8.200" fill="none" stroke="#a0a0a0" stroke-width="1.600"/>
</symbol>
<symbol id="t-bmclear" viewBox="0 0 16 16">
 <path d="M7.600 3.600h7v11.200L11 11.600 7.600 14.800Z" fill="#b0b0b0"/>
 <path d="M1.600 1.200l7 7M8.600 1.200l-7 7" fill="none" stroke="#a0a0a0" stroke-width="1.600"/>
</symbol>
<symbol id="t-cliplist" viewBox="0 0 16 16">
 <rect x="0.800" y="2.200" width="12" height="10.400" rx="1" fill="#f0f0f0" stroke="#333" stroke-width="1.100"/>
 <path d="M4 2.400l1-1.600h3.600l1 1.600Z" fill="#ddd" stroke="#333" stroke-width="0.900"/>
 <path d="M2.600 5.400h8.400M2.600 7.400h8.400" stroke="#555" stroke-width="0.900"/>
 <rect x="4.600" y="8.800" width="10.800" height="6" rx="1" fill="#fff" stroke="#222" stroke-width="1.200"/>
 <path d="M6.200 10.800h1.200M6.200 12.800h1.200" stroke="#333" stroke-width="1"/>
 <path d="M8.800 10.800h4.800M8.800 12.800h4.800" stroke="#2a3ad0" stroke-width="1.200"/>
</symbol>
<symbol id="t-newobj" viewBox="0 0 16 16">
 <rect x="3" y="4.400" width="12" height="10.400" fill="#d4d4d4" stroke="#b8b8b8" stroke-width="1"/>
 <path d="M3 6.600h12" stroke="#b0b0b0" stroke-width="1"/>
 <g fill="#f4f4f4"><rect x="5" y="8" width="2" height="2"/><rect x="8.200" y="8" width="2" height="2"/><rect x="11.400" y="8" width="2" height="2"/><rect x="5" y="11.400" width="2" height="2"/><rect x="8.200" y="11.400" width="2" height="2"/><rect x="11.400" y="11.400" width="2" height="2"/></g>
 <path d="M0.400 0.600l5 4.600M4.200 0v5.400M0 3.200h6.400M1 6.200l3.600-3" stroke="#b4b4b4" stroke-width="0.900"/>
</symbol>
<symbol id="t-rotcopy" viewBox="0 0 16 16">
 <path d="M1.400 5.200h7l2.200 2.200v8H1.400Z" fill="#fff" stroke="#2a2a2a" stroke-width="1"/>
 <path d="M7.400 3.600c1.200-2.600 4.800-2.800 6.200-0.400" fill="none" stroke="#111" stroke-width="1"/>
 <path d="M15.200 1.400v3.600h-3.400Z" fill="#111"/>
</symbol>
<symbol id="t-download" viewBox="0 0 16 16">
 <path d="M1 4.400V15h14V4.400" fill="#fff" stroke="#222" stroke-width="1.100"/>
 <g stroke="#555" stroke-width="1" stroke-dasharray="1 1"><path d="M2.600 9.600h11M2.600 11.600h11M2.600 13.400h11"/></g>
 <g stroke="#2a3ab0" stroke-width="0.900" stroke-dasharray="1 0.900"><path d="M2.400 0.400v4M4.800 0.400v3M7.200 0.400v4M9.600 0.400v3M12 0.400v4M14 0.400v3"/></g>
 <path d="M4.800 2.400v4M10.800 2.400v4" stroke="#1a2aa0" stroke-width="1.400"/>
 <path d="M2.400 5.400h4.800L4.800 8.600ZM8.400 5.400h4.800L10.800 8.600Z" fill="#1a2aa0"/>
</symbol>
<symbol id="t-login" viewBox="0 0 16 16">
 <g fill="#8d92d2"><path id="gt3b" d="M4.300 0.500h2.200l0.300 2h-2.800Z"/><use href="#gt3b" transform="rotate(36 5.400 6.400)"/><use href="#gt3b" transform="rotate(72 5.400 6.400)"/><use href="#gt3b" transform="rotate(108 5.400 6.400)"/><use href="#gt3b" transform="rotate(144 5.400 6.400)"/><use href="#gt3b" transform="rotate(180 5.400 6.400)"/><use href="#gt3b" transform="rotate(216 5.400 6.400)"/><use href="#gt3b" transform="rotate(252 5.400 6.400)"/><use href="#gt3b" transform="rotate(288 5.400 6.400)"/><use href="#gt3b" transform="rotate(324 5.400 6.400)"/><circle cx="5.400" cy="6.400" r="4.900"/></g>
 <circle cx="5.400" cy="6.400" r="2.300" fill="#f8f8f8"/>
 <circle cx="13.200" cy="3.800" r="2.500" fill="#14d014"/>
 <path d="M10.600 8.400h3.400M10.600 10h3.400" stroke="#e8e8e8" stroke-width="1"/>
 <path d="M9.400 15.400l3.400-3.800" stroke="#222" stroke-width="1.400"/>
 <path d="M10.800 10.600h3.600v3.400Z" fill="#222"/>
 <path d="M10.400 10.800l1.400 1.200" stroke="#18a0a8" stroke-width="1"/>
</symbol>
<symbol id="t-logout" viewBox="0 0 16 16">
 <g fill="#bdbdbd"><use href="#gt3b"/><use href="#gt3b" transform="rotate(36 5.400 6.400)"/><use href="#gt3b" transform="rotate(72 5.400 6.400)"/><use href="#gt3b" transform="rotate(108 5.400 6.400)"/><use href="#gt3b" transform="rotate(144 5.400 6.400)"/><use href="#gt3b" transform="rotate(180 5.400 6.400)"/><use href="#gt3b" transform="rotate(216 5.400 6.400)"/><use href="#gt3b" transform="rotate(252 5.400 6.400)"/><use href="#gt3b" transform="rotate(288 5.400 6.400)"/><use href="#gt3b" transform="rotate(324 5.400 6.400)"/><circle cx="5.400" cy="6.400" r="4.900"/></g>
 <circle cx="5.400" cy="6.400" r="2.300" fill="#f8f8f8"/>
 <path d="M10.800 1l4.400 4.800M15.200 1l-4.400 4.800" stroke="#b8b8b8" stroke-width="1.200"/>
 <path d="M10.600 8.400h3.400M10.600 10h3.400" stroke="#e4e4e4" stroke-width="1"/>
 <path d="M9.400 15.400l3.400-3.800" stroke="#b8b8b8" stroke-width="1.300"/>
 <path d="M10.800 10.600h3.600v3.400Z" fill="#b8b8b8"/>
</symbol>
<symbol id="t-wrench" viewBox="0 0 16 16">
 <path d="M5.600 6.200L13.200 13.600" stroke="#1e1e1e" stroke-width="3.200" stroke-linecap="round"/>
 <path d="M0.400 5.400L2.600 3.600 4.600 5.400 6.400 3.800 4.600 1.200 7.200 1.400 9 3.400 8.600 6.600 6.600 8.400 3.400 8.200 1.200 7Z" fill="#1e1e1e"/>
 <circle cx="12.200" cy="3.800" r="2.500" fill="#14d014"/>
</symbol>
<g id="t-lines"><path d="M7.400 3.400h7.400M7.400 5.400h7.400M7.400 7.400h7.400M7.400 9.400h7.400M7.400 11.400h7.400" stroke="#a8a8a8" stroke-width="1"/></g>
<symbol id="t-step1" viewBox="0 0 16 16">
 <use href="#t-lines"/>
 <path d="M5.600 2H2.200v10.600h2.400" fill="none" stroke="#a0a0a0" stroke-width="1.300"/>
 <path d="M3.400 10.200h3.600L5.200 14.400Z" fill="#a0a0a0" transform="rotate(-20 5 12)"/>
</symbol>
<symbol id="t-step2" viewBox="0 0 16 16">
 <path d="M8.400 5.400h6.800M8.400 7.400h6.800M8.400 9.400h6.800M8.400 11.400h6.800M8.400 13.400h6.800" stroke="#a8a8a8" stroke-width="1"/>
 <path d="M6.400 8.600c2-3.800-2.400-6.600-5-3.400" fill="none" stroke="#a0a0a0" stroke-width="1.300"/>
 <path d="M3.800 7.200h5L6.400 10.400Z" fill="#a0a0a0"/>
</symbol>
<symbol id="t-step3" viewBox="0 0 16 16">
 <path d="M7.400 7.400h7.800M7.400 9.400h7.800M7.400 11.400h7.800M7.400 13.400h7.800" stroke="#a8a8a8" stroke-width="1"/>
 <path d="M7 7.800H3.400c-2.600 0-2.600-3.800 0-3.800h2" fill="none" stroke="#a0a0a0" stroke-width="1.300"/>
 <path d="M4.600 1.400v5.200L8 4Z" fill="#a0a0a0"/>
</symbol>
<symbol id="t-step4" viewBox="0 0 16 16">
 <path d="M8.400 3.400h6.800M8.400 5.400h6.800M8.400 7.400h6.800M8.400 9.400h6.800M8.400 11.400h6.800" stroke="#a8a8a8" stroke-width="1"/>
 <path d="M0.600 5.400h4" stroke="#a0a0a0" stroke-width="1.400"/>
 <path d="M3.800 2.800v5.200L7.200 5.400Z" fill="#a0a0a0"/>
</symbol>
<symbol id="t-step5" viewBox="0 0 16 16">
 <path d="M4.200 6.400c-2.600-2.200 0-6.200 3.400-4.800 1.800 0.800 2.200 2.600 1.400 4" fill="none" stroke="#a0a0a0" stroke-width="1.200"/>
 <path d="M10.600 0.800v3.600H7Z" fill="#a0a0a0"/>
 <path d="M3.400 9.600h5.600V7l4.600 4.200L9 15.400v-2.600H3.400Z" fill="#f4f4f4" stroke="#a0a0a0" stroke-width="1.100"/>
</symbol>
<symbol id="t-arrow" viewBox="0 0 16 16">
 <path d="M3.600 6.400h4V4.200l4.600 3.800-4.600 3.800V9.600h-4Z" fill="#fff" stroke="#4c4c4c" stroke-width="0.950" stroke-linejoin="miter"/>
</symbol>
<symbol id="t-gridoff" viewBox="0 0 16 16">
 <rect x="1" y="2.400" width="14.400" height="10.800" fill="#9c9c9c"/>
 <path d="M1 5h14.400M1 7.600h14.400" stroke="#7c7c7c" stroke-width="1"/>
 <path d="M15.400 3.400V13.200H5Z" fill="#c8c8c8"/>
 <path d="M9 10.400h6.400M11.400 8v5.200M13.600 6v7.200" stroke="#7c7c7c" stroke-width="0.900"/>
 <path d="M0.600 15.600L15.800 0.600" stroke="#6a6a6a" stroke-width="1.100"/>
</symbol>
<symbol id="t-cart" viewBox="0 0 16 16">
 <path d="M1 4.600h11.200M1.800 6.400h9.800M2.600 8.200h8.400" stroke="#3c3c3c" stroke-width="1.100"/>
 <path d="M1 4.600l1.800 4.400h8l1.400-4.400" fill="none" stroke="#3c3c3c" stroke-width="0.800"/>
 <path d="M12 4.800l1-2h1.600" fill="none" stroke="#3c3c3c" stroke-width="0.900"/>
 <path d="M3 9.200v1.400h8.400" fill="none" stroke="#3c3c3c" stroke-width="0.900"/>
 <circle cx="4.200" cy="12.400" r="1" fill="#2a2a2a"/><circle cx="9.800" cy="12.400" r="1" fill="#2a2a2a"/>
 <circle cx="15" cy="2.800" r="0.800" fill="#2a2a2a"/>
</symbol>
<symbol id="t-check" viewBox="0 0 16 16">
 <path d="M1.200 1.200h6.400v6.400l-2.200-2.200-2.600 2.800-2-2 2.800-2.600Z" fill="#a8a8a8"/>
 <path d="M7.200 10.400l2.400 3 5-7.200" fill="none" stroke="#a6a6a6" stroke-width="1.700"/>
 <path d="M4.200 10.200l1.800 2.600" fill="none" stroke="#b8b8b8" stroke-width="1.300"/>
</symbol>
</defs>
</svg>
<!-- ===== window frame / title bar ===== -->
<div class="a" style="left:1px;top:1px;width:1642px;height:30px;background:#fff;"></div>
<svg class="a" style="left:8px;top:6.800px" width="18" height="18" viewBox="0 0 18 18"><use href="#i-logo"/></svg>
<svg class="a" style="left:1515px;top:4px" width="120" height="24" viewBox="0 0 120 24">
 <path d="M8.2 11.6h10.6" stroke="#111" stroke-width="1.1" fill="none"/>
 <rect x="53.8" y="6.5" width="9.6" height="9.6" stroke="#111" stroke-width="1.1" fill="none"/>
 <path d="M100 6.2l10 10M110 6.2l-10 10" stroke="#111" stroke-width="1.1" fill="none"/>
</svg>
<!-- menu bar -->
<div class="a" style="left:1px;top:31px;width:1642px;height:24px;background:linear-gradient(to right,#f0f0f0 0%,#f0f0f0 45%,#fbfbfb 100%);"></div>
<svg class="a" style="left:1589px;top:35px" width="18" height="16" viewBox="0 0 18 16"><path d="M1.2 0.8H16L10.6 8.2 11.8 14.6 9.8 15.2 8.2 13.2Z" fill="#e1000f"/></svg>
<!-- toolbar row -->
<div class="a" style="left:1px;top:55px;width:1642px;height:25px;background:linear-gradient(to bottom,#fcfcfc 0%,#f8f8f8 55%,#ececec 100%);"></div>
<div class="a" style="left:594px;top:56px;width:167px;height:23px;background:linear-gradient(to bottom,#fff,#fafafa);"></div><div class="a" style="left:761px;top:56px;width:12px;height:23px;background:linear-gradient(to bottom,#f8f8f8,#f0f0f0);"></div>
<svg class="a" style="left:762px;top:65px" width="8" height="5" viewBox="0 0 8 5"><path d="M0.5 0.5h7L4 4.5Z" fill="#111"/></svg>
<!-- second (empty) toolbar row -->
<div class="a" style="left:1px;top:80px;width:1642px;height:25px;background:linear-gradient(to bottom,#fbfbfb 0%,#f6f6f6 70%,#f0f0f0 100%);"></div>

<!-- ===== Devices panel ===== -->
<div class="a" style="left:2px;top:106px;width:367px;height:22px;background:#99b4d1;"></div>
<div class="a" style="left:2px;top:128px;width:368px;height:1px;background:#7f8a99;"></div>
<div class="a" style="left:2px;top:129px;width:367px;height:926px;background:#fff;"></div>
<div class="a" style="left:369px;top:106px;width:1px;height:950px;background:#6d6d6d;"></div>
<div class="a" style="left:2px;top:1054.5px;width:368px;height:1.5px;background:#6a6a6a;"></div>
<svg class="a" style="left:308.500px;top:110.600px" width="60" height="16" viewBox="0 0 60 16">
 <path d="M4.4 5.8h8.4L8.6 10.4Z" fill="#000"/>
 <path d="M26.6 2.6h4.8M27.4 2.6v5M30.8 2.6v5M25.4 7.8h7.2M29 7.8v4.4" stroke="#000" stroke-width="1.3" fill="none"/>
 <path d="M45.800 3.400l7.400 7.600M53.200 3.400l-7.400 7.600" stroke="#000" stroke-width="2.300" fill="none"/>
</svg>
<!-- tree scroll/drop button -->
<div class="a" style="left:352px;top:129.500px;width:16.600px;height:17px;background:#e9e9e9;border-bottom:1px solid #b4b4b4;border-left:1px solid #f4f4f4;box-sizing:border-box;"></div>
<svg class="a" style="left:355.900px;top:136px" width="10" height="6" viewBox="0 0 10 6"><path d="M0.6 0.6h8.8L5 5.4Z" fill="#000"/></svg>

<!-- bottom tabs of Devices panel -->
<div class="a" style="left:2px;top:1057px;width:368px;height:1px;background:#c2c2c2;"></div>
<div class="a" style="left:55px;top:1057px;width:66px;height:22px;border:1px solid #9c9c9c;border-top:none;border-radius:0 0 3px 3px;box-sizing:border-box;background:#fff;"></div>
<svg class="ic" style="left:5px;top:1060px" viewBox="0 0 16 16"><use href="#i-pou"/></svg>
<svg class="ic" style="left:58px;top:1060px" viewBox="0 0 16 16"><use href="#i-devtab"/></svg>

<!-- area between editor and status -->
<div class="a" style="left:1px;top:1080px;width:1642px;height:22px;background:linear-gradient(to right,#f2f2f2 0%,#f2f2f2 40%,#fcfcfc 100%);"></div>

<!-- messages tab -->
<div class="a" style="left:3px;top:1082px;width:313px;height:21px;border:1.300px solid #999;border-bottom:none;border-radius:3.500px 3.500px 0 0;box-sizing:border-box;background:#f5f5f5;"></div>
<svg class="ic" style="left:6px;top:1084px" viewBox="0 0 16 16"><use href="#i-msg"/></svg>
<div class="a" style="left:1px;top:1102px;width:1642px;height:1px;background:#dadada;"></div>
<!-- status bar -->
<div class="a" style="left:1px;top:1103px;width:1642px;height:20px;background:#f0f0f0;"></div>
<div class="a" style="left:1048px;top:1105px;width:1px;height:17px;background:#dcdcdc;"></div>
<div class="a" style="left:1072px;top:1105px;width:1px;height:17px;background:#dcdcdc;"></div>
<div class="a" style="left:1336px;top:1105px;width:1px;height:17px;background:#dcdcdc;"></div>
<div class="a" style="left:1360px;top:1105px;width:1px;height:17px;background:#dcdcdc;"></div>
<div class="a" style="left:1601px;top:1105px;width:1px;height:17px;background:#dcdcdc;"></div>
<div class="a" style="left:1625px;top:1105px;width:1px;height:17px;background:#dcdcdc;"></div>
<svg class="ic" style="left:1053px;top:1104px" viewBox="0 0 16 16"><use href="#i-cloud"/></svg>
<svg class="a" style="left:1161.5px;top:1107.500px" width="11.500" height="11.500" viewBox="0 0 13 13"><use href="#i-err"/></svg>
<svg class="a" style="left:1190.500px;top:1107.500px" width="11.500" height="11.500" viewBox="0 0 13 13"><use href="#i-warn"/></svg>
<svg class="a" style="left:1294px;top:1107.500px" width="11.500" height="11.500" viewBox="0 0 13 13"><use href="#i-warn"/></svg>
<svg class="ic" style="left:1341px;top:1106px" viewBox="0 0 16 16"><use href="#i-stgear"/></svg>
<svg class="ic" style="left:1605px;top:1105px" viewBox="0 0 16 16"><use href="#i-shield"/></svg>
<svg class="a" style="left:1632.500px;top:1113.500px" width="10" height="10" viewBox="0 0 10 10"><g fill="#b2b2b2"><rect x="6.5" y="0.5" width="2" height="2"/><rect x="3.5" y="3.5" width="2" height="2"/><rect x="6.5" y="3.5" width="2" height="2"/><rect x="0.5" y="6.5" width="2" height="2"/><rect x="3.5" y="6.5" width="2" height="2"/><rect x="6.5" y="6.5" width="2" height="2"/></g></svg>

<!-- window borders -->
<div class="a" style="left:0;top:0;width:1644px;height:1px;background:#3d465c;"></div>
<div class="a" style="left:0;top:0;width:1.500px;height:1125px;background:linear-gradient(to bottom,#39425c 0px,#4a4f5c 100px,#666 140px,#6a6a6a 900px,#26324f 1045px,#1e2b4c 1125px);"></div>
<div class="a" style="left:1642.600px;top:0;width:1.400px;height:1125px;background:#3a4360;"></div>
<div class="a" style="left:0;top:1123.500px;width:1644px;height:1.500px;background:#2a3350;"></div>
<!-- ===== toolbar icons ===== -->
<svg class="ic" style="left:4px;top:59px" viewBox="0 0 16 16"><use href="#t-new"/></svg>
<svg class="ic" style="left:27px;top:59px" viewBox="0 0 16 16"><use href="#t-open"/></svg>
<svg class="ic" style="left:50.5px;top:59px" viewBox="0 0 16 16"><use href="#t-save"/></svg>
<svg class="ic" style="left:79.5px;top:59px" viewBox="0 0 16 16"><use href="#t-print"/></svg>
<svg class="ic" style="left:108.5px;top:59px" viewBox="0 0 16 16"><use href="#t-copyfolder"/></svg>
<svg class="ic" style="left:137.5px;top:59px" viewBox="0 0 16 16"><use href="#t-undo"/></svg>
<svg class="ic" style="left:161px;top:59px" viewBox="0 0 16 16"><use href="#t-redo"/></svg>
<svg class="ic" style="left:183.5px;top:59px" viewBox="0 0 16 16"><use href="#t-cut"/></svg>
<svg class="ic" style="left:206.5px;top:59px" viewBox="0 0 16 16"><use href="#t-copy"/></svg>
<svg class="ic" style="left:230px;top:59px" viewBox="0 0 16 16"><use href="#t-paste"/></svg>
<svg class="ic" style="left:253px;top:59px" viewBox="0 0 16 16"><use href="#t-del"/></svg>
<svg class="ic" style="left:282px;top:59px" viewBox="0 0 16 16"><use href="#t-find"/></svg>
<svg class="ic" style="left:305.5px;top:59px" viewBox="0 0 16 16"><use href="#t-replace"/></svg>
<svg class="ic" style="left:328.5px;top:59px" viewBox="0 0 16 16"><use href="#t-findfiles"/></svg>
<svg class="ic" style="left:352px;top:59px" viewBox="0 0 16 16"><use href="#t-replfiles"/></svg>
<svg class="ic" style="left:380.5px;top:59px" viewBox="0 0 16 16"><use href="#t-bm"/></svg>
<svg class="ic" style="left:404px;top:59px" viewBox="0 0 16 16"><use href="#t-bmprev"/></svg>
<svg class="ic" style="left:427px;top:59px" viewBox="0 0 16 16"><use href="#t-bmnext"/></svg>
<svg class="ic" style="left:450px;top:59px" viewBox="0 0 16 16"><use href="#t-bmclear"/></svg>
<svg class="ic" style="left:479.5px;top:59px" viewBox="0 0 16 16"><use href="#t-cliplist"/></svg>
<svg class="ic" style="left:508px;top:59px" viewBox="0 0 16 16"><use href="#t-newobj"/></svg>
<svg class="ic" style="left:538px;top:59px" viewBox="0 0 16 16"><use href="#t-rotcopy"/></svg>
<svg class="ic" style="left:566.5px;top:59px" viewBox="0 0 16 16"><use href="#t-download"/></svg>
<svg class="ic" style="left:777px;top:59px" viewBox="0 0 16 16"><use href="#t-login"/></svg>
<svg class="ic" style="left:800.5px;top:59px" viewBox="0 0 16 16"><use href="#t-logout"/></svg>
<svg class="ic" style="left:870.5px;top:59px" viewBox="0 0 16 16"><use href="#t-wrench"/></svg>
<svg class="ic" style="left:898px;top:59px" viewBox="0 0 16 16"><use href="#t-step1"/></svg>
<svg class="ic" style="left:921px;top:59px" viewBox="0 0 16 16"><use href="#t-step2"/></svg>
<svg class="ic" style="left:944px;top:59px" viewBox="0 0 16 16"><use href="#t-step3"/></svg>
<svg class="ic" style="left:967px;top:59px" viewBox="0 0 16 16"><use href="#t-step4"/></svg>
<svg class="ic" style="left:990px;top:59px" viewBox="0 0 16 16"><use href="#t-step5"/></svg>
<svg class="ic" style="left:1020px;top:59px" viewBox="0 0 16 16"><use href="#t-arrow"/></svg>
<svg class="ic" style="left:1049px;top:59px" viewBox="0 0 16 16"><use href="#t-gridoff"/></svg>
<svg class="ic" style="left:1078px;top:59px" viewBox="0 0 16 16"><use href="#t-cart"/></svg>
<svg class="ic" style="left:1108px;top:59px" viewBox="0 0 16 16"><use href="#t-check"/></svg>
<div class="sep" style="left:72.9px"></div>
<div class="sep" style="left:101.9px"></div>
<div class="sep" style="left:130.9px"></div>
<div class="sep" style="left:275.9px"></div>
<div class="sep" style="left:374.7px"></div>
<div class="sep" style="left:472.9px"></div>
<div class="sep" style="left:502.0px"></div>
<div class="sep" style="left:560.4px"></div>
<div class="sep" style="left:589.4px"></div>
<div class="sep" style="left:891.4px"></div>
<div class="sep" style="left:1013.4px"></div>
<div class="sep" style="left:1042.9px"></div>
<div class="sep" style="left:1071.8000000000002px"></div>
<div class="sep" style="left:1101.2px"></div>
<svg class="a" style="left:525.5px;top:65.5px" width="6" height="4" viewBox="0 0 6 4"><path d="M0.300 0.300h5.400L3 3.600Z" fill="#a0a0a0"/></svg>
<svg class="a" style="left:832.500px;top:64.800px" width="7" height="11" viewBox="0 0 7 11"><path d="M0.500 0.600L5.600 5 0.500 9.600Z" fill="#a8a8a8"/></svg>
<div class="a" style="left:853px;top:66.4px;width:7.800px;height:7.600px;background:#a4a4a4;"></div>
<!-- ===== device tree ===== -->
<div class="a" style="left:82.300px;top:644.5px;width:19px;height:18.600px;background:#bcd9f4;"></div>
<div class="a" style="left:101px;top:644.5px;width:223.700px;height:18.600px;background:#bddaf5;border:1px solid #2f8cf0;box-sizing:border-box;"></div>
<div class="hl" style="left:17.0px;top:138.0px;width:4.0px"></div>
<div class="hl" style="left:37.0px;top:157.1px;width:4.0px"></div>
<div class="hl" style="left:57.0px;top:176.2px;width:4.0px"></div>
<div class="hl" style="left:77.0px;top:195.3px;width:4.0px"></div>
<div class="hl" style="left:97.0px;top:214.4px;width:4.0px"></div>
<div class="hl" style="left:112.5px;top:233.4px;width:8.5px"></div>
<div class="hl" style="left:117.0px;top:252.5px;width:4.0px"></div>
<div class="hl" style="left:117.0px;top:271.6px;width:4.0px"></div>
<div class="hl" style="left:112.5px;top:290.7px;width:8.5px"></div>
<div class="hl" style="left:112.5px;top:309.8px;width:8.5px"></div>
<div class="hl" style="left:112.5px;top:328.9px;width:8.5px"></div>
<div class="hl" style="left:112.5px;top:348.0px;width:8.5px"></div>
<div class="hl" style="left:112.5px;top:367.1px;width:8.5px"></div>
<div class="hl" style="left:112.5px;top:386.2px;width:8.5px"></div>
<div class="hl" style="left:112.5px;top:405.3px;width:8.5px"></div>
<div class="hl" style="left:117.0px;top:424.4px;width:4.0px"></div>
<div class="hl" style="left:112.5px;top:443.4px;width:8.5px"></div>
<div class="hl" style="left:97.0px;top:462.5px;width:4.0px"></div>
<div class="hl" style="left:92.5px;top:481.6px;width:8.5px"></div>
<div class="hl" style="left:97.0px;top:500.7px;width:4.0px"></div>
<div class="hl" style="left:92.5px;top:519.8px;width:8.5px"></div>
<div class="hl" style="left:92.5px;top:538.9px;width:8.5px"></div>
<div class="hl" style="left:97.0px;top:558.0px;width:4.0px"></div>
<div class="hl" style="left:97.0px;top:577.1px;width:4.0px"></div>
<div class="hl" style="left:52.5px;top:596.2px;width:8.5px"></div>
<div class="hl" style="left:52.5px;top:615.2px;width:8.5px"></div>
<div class="hl" style="left:57.0px;top:634.3px;width:4.0px"></div>
<div class="hl" style="left:77.0px;top:653.4px;width:4.0px"></div>
<div class="hl" style="left:92.5px;top:672.5px;width:8.5px"></div>
<div class="hl" style="left:92.5px;top:691.6px;width:8.5px"></div>
<div class="vl" style="left:32.0px;top:146.3px;height:11.1px"></div>
<div class="vl" style="left:52.0px;top:165.4px;height:469.2px"></div>
<div class="vl" style="left:72.0px;top:184.5px;height:11.1px"></div>
<div class="vl" style="left:92.0px;top:203.6px;height:373.8px"></div>
<div class="vl" style="left:112.0px;top:222.7px;height:221.1px"></div>
<div class="vl" style="left:72.0px;top:642.6px;height:11.1px"></div>
<div class="vl" style="left:92.0px;top:661.7px;height:30.2px"></div>
<div class="vl" style="left:22.5px;top:130px;height:8px"></div>
<div class="hl" style="left:23px;top:130.5px;width:8px"></div>
<svg class="a" style="left:7.0px;top:133.1px" width="9" height="9" viewBox="0 0 9 9"><use href="#x-minus"/></svg>
<svg class="a" style="left:27.0px;top:152.2px" width="9" height="9" viewBox="0 0 9 9"><use href="#x-minus"/></svg>
<svg class="a" style="left:47.0px;top:171.3px" width="9" height="9" viewBox="0 0 9 9"><use href="#x-minus"/></svg>
<svg class="a" style="left:67.0px;top:190.4px" width="9" height="9" viewBox="0 0 9 9"><use href="#x-minus"/></svg>
<svg class="a" style="left:87.0px;top:209.5px" width="9" height="9" viewBox="0 0 9 9"><use href="#x-minus"/></svg>
<svg class="a" style="left:107.0px;top:247.6px" width="9" height="9" viewBox="0 0 9 9"><use href="#x-plus"/></svg>
<svg class="a" style="left:107.0px;top:266.7px" width="9" height="9" viewBox="0 0 9 9"><use href="#x-plus"/></svg>
<svg class="a" style="left:107.0px;top:419.5px" width="9" height="9" viewBox="0 0 9 9"><use href="#x-plus"/></svg>
<svg class="a" style="left:87.0px;top:457.6px" width="9" height="9" viewBox="0 0 9 9"><use href="#x-plus"/></svg>
<svg class="a" style="left:87.0px;top:495.8px" width="9" height="9" viewBox="0 0 9 9"><use href="#x-plus"/></svg>
<svg class="a" style="left:87.0px;top:553.1px" width="9" height="9" viewBox="0 0 9 9"><use href="#x-plus"/></svg>
<svg class="a" style="left:87.0px;top:572.2px" width="9" height="9" viewBox="0 0 9 9"><use href="#x-plus"/></svg>
<svg class="a" style="left:47.0px;top:629.4px" width="9" height="9" viewBox="0 0 9 9"><use href="#x-minus"/></svg>
<svg class="a" style="left:67.0px;top:648.5px" width="9" height="9" viewBox="0 0 9 9"><use href="#x-minus"/></svg>
<svg class="ic" style="left:23px;top:130.3px" viewBox="0 0 16 16"><use href="#i-project"/></svg>
<svg class="ic" style="left:42px;top:149.4px" viewBox="0 0 16 16"><use href="#i-cpu"/></svg>
<svg class="ic" style="left:62px;top:168.5px" viewBox="0 0 16 16"><use href="#i-plclogic"/></svg>
<svg class="ic" style="left:82px;top:187.6px" viewBox="0 0 16 16"><use href="#i-gear"/></svg>
<svg class="ic" style="left:102px;top:206.7px" viewBox="0 0 16 16"><use href="#i-folder"/></svg>
<svg class="ic" style="left:122px;top:225.8px" viewBox="0 0 16 16"><use href="#i-struct"/></svg>
<svg class="ic" style="left:122px;top:244.8px" viewBox="0 0 16 16"><use href="#i-folder"/></svg>
<svg class="ic" style="left:122px;top:263.9px" viewBox="0 0 16 16"><use href="#i-folder"/></svg>
<svg class="ic" style="left:122px;top:283.0px" viewBox="0 0 16 16"><use href="#i-globe"/></svg>
<svg class="ic" style="left:122px;top:302.1px" viewBox="0 0 16 16"><use href="#i-globe"/></svg>
<svg class="ic" style="left:122px;top:321.2px" viewBox="0 0 16 16"><use href="#i-globe"/></svg>
<svg class="ic" style="left:122px;top:340.3px" viewBox="0 0 16 16"><use href="#i-globe"/></svg>
<svg class="ic" style="left:122px;top:359.4px" viewBox="0 0 16 16"><use href="#i-globe"/></svg>
<svg class="ic" style="left:122px;top:378.5px" viewBox="0 0 16 16"><use href="#i-globe"/></svg>
<svg class="ic" style="left:122px;top:397.6px" viewBox="0 0 16 16"><use href="#i-imgpool"/></svg>
<svg class="ic" style="left:122px;top:416.7px" viewBox="0 0 16 16"><use href="#i-prg"/></svg>
<svg class="ic" style="left:122px;top:435.7px" viewBox="0 0 16 16"><use href="#i-imgpool"/></svg>
<svg class="ic" style="left:102px;top:454.8px" viewBox="0 0 16 16"><use href="#i-folder"/></svg>
<svg class="ic" style="left:102px;top:473.9px" viewBox="0 0 16 16"><use href="#i-libmgr"/></svg>
<svg class="ic" style="left:102px;top:493.0px" viewBox="0 0 16 16"><use href="#i-prg"/></svg>
<svg class="ic" style="left:102px;top:512.1px" viewBox="0 0 16 16"><use href="#i-prg"/></svg>
<svg class="ic" style="left:102px;top:531.2px" viewBox="0 0 16 16"><use href="#i-prg"/></svg>
<svg class="ic" style="left:102px;top:550.3px" viewBox="0 0 16 16"><use href="#i-taskcfg"/></svg>
<svg class="ic" style="left:102px;top:569.4px" viewBox="0 0 16 16"><use href="#i-vismgr"/></svg>
<svg class="ic" style="left:62px;top:588.5px" viewBox="0 0 16 16"><use href="#i-plcmgr"/></svg>
<svg class="ic" style="left:62px;top:607.5px" viewBox="0 0 16 16"><use href="#i-observer"/></svg>
<svg class="ic" style="left:62px;top:626.6px" viewBox="0 0 16 16"><use href="#i-sysbus"/></svg>
<svg class="ic" style="left:82px;top:645.7px" viewBox="0 0 16 16"><use href="#i-rou"/></svg>
<svg class="ic" style="left:102px;top:664.8px" viewBox="0 0 16 16"><use href="#i-rel"/></svg>
<svg class="ic" style="left:102px;top:683.9px" viewBox="0 0 16 16"><use href="#i-ain"/></svg>
<div class="a" style="left:139.600px;top:319.200px;width:133.400px;height:4.300px;background:#fa0000;"></div>
<svg class="a" style="left:0;top:0" width="370" height="720" viewBox="0 0 370 720"><path d="M124.0 508.0 L126.0 510.0 L128.0 508.0 L130.0 510.0 L132.0 508.0 L134.0 510.0 L136.0 508.0 L138.0 510.0 L140.0 508.0 L142.0 510.0 L144.0 508.0 L146.0 510.0 L148.0 508.0 L150.0 510.0 L152.0 508.0 L154.0 510.0 L156.0 508.0 L158.0 510.0 L160.0 508.0 L162.0 510.0 L164.0 508.0 L166.0 510.0 L168.0 508.0 L170.0 510.0 L172.0 508.0 L174.0 510.0 L176.0 508.0 L178.0 510.0 L180.0 508.0 L182.0 510.0 L184.0 508.0 L186.0 510.0 L188.0 508.0 L190.0 510.0 L192.0 508.0 L194.0 510.0 L196.0 508.0 L198.0 510.0 L200.0 508.0" fill="none" stroke="#2424f0" stroke-width="0.9"/></svg>
<!-- ===== editor ===== -->
<div class="a" style="left:374px;top:105px;width:1268px;height:21px;background:#f0f0f0;border-top:2px solid #c6c6c6;border-left:1px solid #adadad;box-sizing:border-box;"></div>
<div class="a" style="left:374px;top:125px;width:1268px;height:954.500px;background:#fff;border:1px solid #a9a9a9;border-left:1px solid #a6a6a6;border-top:2px solid #cacaca;border-right:none;box-sizing:border-box;"></div>
<div class="a" style="left:1618px;top:128px;width:24px;height:950px;background:linear-gradient(to right,#ffffff 0%,#e9e9dc 35%,#d3d3c2 70%,#c9c9b8 100%);"></div>
<div class="a" style="left:1641.300px;top:128px;width:1.300px;height:951px;background:#9095ac;"></div>
<svg class="a" style="left:374px;top:106px" width="222" height="22" viewBox="0 0 222 22"><path d="M1 21.5 V20.2 Q3 20 4.400 18.800 L21.500 3.800 Q22.800 2.800 24.500 2.800 H213.500 Q216.500 2.800 216.500 5.800 V21.500 Z" fill="#fff"/><path d="M1 20.200 Q3 20 4.400 18.800 L21.500 3.800 Q22.800 2.800 24.500 2.800 H213.500 Q216.500 2.800 216.500 5.800 V20.500" fill="none" stroke="#b8b8b8" stroke-width="1.300"/></svg>

<svg class="ic" style="left:394.3px;top:110.3px" viewBox="0 0 16 16"><use href="#i-globe"/></svg>
<svg class="a" style="left:575px;top:113px" width="10" height="10" viewBox="0 0 10 10"><path d="M1.2 1.4l7.4 7.4M8.6 1.4l-7.4 7.4" stroke="#000" stroke-width="2" fill="none"/></svg>
<svg class="a" style="left:1628.100px;top:115.700px" width="10" height="6" viewBox="0 0 10 6"><path d="M0.6 0.6h8.4L4.8 5.2Z" fill="#000"/></svg>
<div class="a" style="left:422.300px;top:128px;width:1.500px;height:950px;background:#c6c6c6;"></div>
<svg class="a" style="left:376px;top:149px" width="11" height="11" viewBox="0 0 11 11"><rect x="1" y="1" width="8.4" height="8.4" fill="#fff" stroke="#3d7fa6" stroke-width="1"/><path d="M1 5.2h8.4" stroke="#3d7fa6" stroke-width="1"/></svg>
<div class="ln" style="top:128.60px;color:#4683ad">1</div>
<div class="code" style="top:128.50px"><span class="at">{attribute &#x27;qualified_only&#x27;}</span></div>
<div class="ln" style="top:145.67px;color:#4683ad">2</div>
<div class="code" style="top:145.57px"><span class="kw">VAR_GLOBAL CONSTANT</span></div>
<div class="ln" style="top:162.74px;color:#4683ad">3</div>
<div class="code" style="top:162.64px">    iNumberOfControllerModules      : <span class="kw">INT</span>       := <span class="st">0</span>;               <span class="cm">// Number of controller modules</span></div>
<div class="ln" style="top:179.81px;color:#4683ad">4</div>
<div class="code" style="top:179.71px">    sModulLabelControllerModule1    : <span class="kw">STRING</span>    := <span class="st">&#x27;CTR04_3&#x27;</span>;       <span class="cm">// Modul-Label controller module 1</span></div>
<div class="ln" style="top:196.88px;color:#4683ad">5</div>
<div class="code" style="top:196.78px">    sModulLabelControllerModule2    : <span class="kw">STRING</span>    := <span class="st">&#x27;CTR04_4&#x27;</span>;       <span class="cm">// Modul-Label controller module 2</span></div>
<div class="ln" style="top:213.95px;color:#4683ad">6</div>
<div class="code" style="top:213.85px">    sModulLabelControllerModule3    : <span class="kw">STRING</span>    := <span class="st">&#x27;CTR04_5&#x27;</span>;       <span class="cm">// Modul-Label controller module 3</span></div>
<div class="ln" style="top:231.02px;color:#4683ad">7</div>
<div class="code" style="top:230.92px">    sModulLabelControllerModule4    : <span class="kw">STRING</span>    := <span class="st">&#x27;CTR04_6&#x27;</span>;       <span class="cm">// Modul-Label controller module 4</span></div>
<div class="ln" style="top:248.09px;color:#4683ad">8</div>
<div class="code" style="top:247.99px">    sModulLabelControllerModule5    : <span class="kw">STRING</span>    := <span class="st">&#x27;CTR04_7&#x27;</span>;       <span class="cm">// Modul-Label controller module 5</span></div>
<div class="ln" style="top:265.16px;color:#4683ad">9</div>
<div class="code" style="top:265.06px">    sModulLabelControllerModule6    : <span class="kw">STRING</span>    := <span class="st">&#x27;CTR04_8&#x27;</span>;       <span class="cm">// Modul-Label controller module 6</span></div>
<div class="ln" style="top:282.23px;color:#4683ad">10</div>
<div class="code" style="top:282.13px">    sModulLabelControllerModule7    : <span class="kw">STRING</span>    := <span class="st">&#x27;CTR04_9&#x27;</span>;       <span class="cm">// Modul-Label controller module 7</span></div>
<div class="ln" style="top:299.30px;color:#4683ad">11</div>
<div class="code" style="top:299.20px">    sModulLabelControllerModule8    : <span class="kw">STRING</span>    := <span class="st">&#x27;CTR04_10&#x27;</span>;      <span class="cm">// Modul-Label controller module 8</span></div>
<div class="ln" style="top:316.37px;color:#4683ad">12</div>
<div class="code" style="top:316.27px">    sModulLabelControllerModule9    : <span class="kw">STRING</span>    := <span class="st">&#x27;CTR04_11&#x27;</span>;      <span class="cm">// Modul-Label controller module 9</span></div>
<div class="ln" style="top:333.44px;color:#4683ad">13</div>
<div class="code" style="top:333.34px">    sModulLabelControllerModule10   : <span class="kw">STRING</span>    := <span class="st">&#x27;CTR04_12&#x27;</span>;      <span class="cm">// Modul-Label controller module 10</span></div>
<div class="ln" style="top:350.51px;color:#4683ad">14</div>
<div class="code" style="top:350.41px"><span class="kw">END_VAR</span></div>
<div class="ln" style="top:367.58px;color:#cc2a30">15</div>
<div class="a" style="left:475px;top:177.200px;width:354px;height:4.500px;background:#fa0000;"></div>
<div class="a" style="left:1618px;top:129.300px;width:21px;height:20.500px;border:1.500px solid #3f7bd2;background:#e9ebf7;box-sizing:border-box;border-radius:2px;"></div>
<svg class="ic" style="left:1620px;top:132px" viewBox="0 0 16 16"><use href="#i-textview"/></svg>
<svg class="ic" style="left:1620px;top:155px;width:15.600px;height:15.600px" viewBox="0 0 16 16"><use href="#i-tableview"/></svg>
<div class="a" style="left:1550px;top:1059px;width:48px;height:20px;border:1px solid #a0a0a0;box-sizing:border-box;background:#f1f1f1;"></div>
<div class="a" style="left:1598px;top:1059px;width:21px;height:20px;border:1px solid #a0a0a0;border-left:none;box-sizing:border-box;background:#f1f1f1;"></div>
<svg class="ic" style="left:1599.500px;top:1060.500px;width:17px;height:17px" viewBox="0 0 16 16"><use href="#i-zoom"/></svg>
<svg class="a" style="left:190px;top:525px" width="220" height="120" viewBox="0 0 220 120"><path d="M6 109.5 L211 9.5" stroke="#2f4a80" stroke-width="1.4" fill="none"/></svg>
<div class="a" style="left:437px;top:516px;width:446px;height:97px;background:#4472c4;border:1.3px solid #2f528f;box-sizing:border-box;"></div>

<!-- texts -->
<span class="t" style="left:29.80px;top:5.84px;font-size:12px;transform:scaleX(1.0328);">Application.project*</span>
<span class="t" style="left:140.50px;top:5.84px;font-size:12px;">-</span>
<span class="t" style="left:147.50px;top:5.84px;font-size:12px;transform:scaleX(0.8639);">CODESYS</span>
<span class="t" style="left:16.00px;top:32.84px;font-size:12px;transform:scaleX(0.9409);">File</span>
<span class="t" style="left:53.00px;top:32.84px;font-size:12px;">Edit</span>
<span class="t" style="left:92.00px;top:32.84px;font-size:12px;">View</span>
<span class="t" style="left:136.50px;top:32.84px;font-size:12px;transform:scaleX(0.9957);">Project</span>
<span class="t" style="left:193.00px;top:32.84px;font-size:12px;">Build</span>
<span class="t" style="left:239.00px;top:32.84px;font-size:12px;transform:scaleX(1.0148);">Online</span>
<span class="t" style="left:293.50px;top:32.84px;font-size:12px;transform:scaleX(0.9951);">Debug</span>
<span class="t" style="left:347.50px;top:32.84px;font-size:12px;transform:scaleX(0.9709);">Tools</span>
<span class="t" style="left:393.50px;top:32.84px;font-size:12px;transform:scaleX(1.0471);">Window</span>
<span class="t" style="left:457.00px;top:32.84px;font-size:12px;transform:scaleX(1.0208);">Help</span>
<span class="t" style="left:501.00px;top:32.84px;font-size:12px;transform:scaleX(0.9195);">SVN</span>
<span class="t" style="left:542.00px;top:32.84px;font-size:12px;transform:scaleX(1.0232);">Git</span>
<span class="t" style="left:597.80px;top:57.84px;font-size:12px;transform:scaleX(1.0423);">Application</span>
<span class="t" style="left:663.10px;top:57.84px;font-size:12px;transform:scaleX(0.8996);">[CPU:</span>
<span class="t" style="left:695.50px;top:57.84px;font-size:12px;transform:scaleX(0.8610);">PLC</span>
<span class="t" style="left:720.10px;top:57.84px;font-size:12px;transform:scaleX(0.9959);">Logic]</span>
<span class="t" style="left:1609.00px;top:33.19px;font-size:11px;transform:scaleX(1.1592);font-weight:bold;color:#e1000f;">62</span>
<span class="t" style="left:6.00px;top:107.52px;font-size:11.5px;transform:scaleX(0.9094);">Devices</span>
<span class="t" style="left:416.50px;top:107.34px;font-size:12.3px;transform:scaleX(0.9591);font-weight:bold;">gvlConfigurationController</span>
<span class="t" style="left:23.00px;top:1057.52px;font-size:11.5px;transform:scaleX(0.8542);color:#5e6272;">POUs</span>
<span class="t" style="left:77.00px;top:1057.52px;font-size:11.5px;transform:scaleX(0.9338);">Devices</span>
<span class="t" style="left:28.50px;top:1081.69px;font-size:11px;transform:scaleX(1.0521);color:#6c6c6c;">Messages - Total 0 error(s), 1 warning(s), 0 message(s)</span>
<span class="t" style="left:1105.00px;top:1103.79px;font-size:11px;transform:scaleX(0.9809);">Last build:</span>
<span class="t" style="left:1178.00px;top:1103.79px;font-size:11px;">0</span>
<span class="t" style="left:1207.50px;top:1103.79px;font-size:11px;">0</span>
<span class="t" style="left:1235.50px;top:1103.79px;font-size:11px;transform:scaleX(0.9486);">Precompile</span>
<span class="t" style="left:1424.50px;top:1103.62px;font-size:11.5px;transform:scaleX(1.0315);">Project user: (nobody)</span>
<span class="t" style="left:1558.00px;top:1058.69px;font-size:11px;">100 %</span>
<span class="t" style="left:44.00px;top:129.22px;font-size:11.5px;transform:scaleX(0.9277);font-style:italic;">Application</span>
<span class="t" style="left:63.40px;top:148.31px;font-size:11.5px;transform:scaleX(0.9223);">CPU (705003)</span>
<span class="t" style="left:83.30px;top:167.40px;font-size:11.5px;transform:scaleX(0.8650);">PLC Logic</span>
<span class="t" style="left:104.50px;top:186.49px;font-size:11.5px;transform:scaleX(1.0092);font-weight:bold;">Application</span>
<span class="t" style="left:124.50px;top:205.58px;font-size:11.5px;transform:scaleX(0.8558);">-OEM</span>
<span class="t" style="left:144.00px;top:224.67px;font-size:11.5px;transform:scaleX(0.9089);">stOemType (STRUCT)</span>
<span class="t" style="left:144.00px;top:243.76px;font-size:11.5px;transform:scaleX(0.8545);">FUN</span>
<span class="t" style="left:144.00px;top:262.85px;font-size:11.5px;transform:scaleX(0.9141);">ProcessImage</span>
<span class="t" style="left:144.00px;top:281.94px;font-size:11.5px;transform:scaleX(0.7908);">GVL</span>
<span class="t" style="left:144.00px;top:301.03px;font-size:11.5px;transform:scaleX(0.9491);">gvlConfigurationController</span>
<span class="t" style="left:144.00px;top:320.12px;font-size:11.5px;transform:scaleX(0.9504);">gvlConfigurationGenerator</span>
<span class="t" style="left:144.00px;top:339.21px;font-size:11.5px;transform:scaleX(0.9367);">gvlConfigurationProcessImage</span>
<span class="t" style="left:144.00px;top:358.30px;font-size:11.5px;transform:scaleX(0.9136);">gvlOem</span>
<span class="t" style="left:144.00px;top:377.39px;font-size:11.5px;transform:scaleX(0.9290);">gvlOemConfig</span>
<span class="t" style="left:144.00px;top:396.48px;font-size:11.5px;transform:scaleX(0.9009);">ImagePool_OEM</span>
<span class="t" style="left:144.00px;top:415.57px;font-size:11.5px;transform:scaleX(0.9083);">SaveRetain (PRG)</span>
<span class="t" style="left:144.00px;top:434.66px;font-size:11.5px;transform:scaleX(0.8606);">TL_OEM</span>
<span class="t" style="left:123.50px;top:453.75px;font-size:11.5px;transform:scaleX(0.9408);">Bootapplication</span>
<span class="t" style="left:123.50px;top:472.84px;font-size:11.5px;transform:scaleX(0.9387);">Library Manager</span>
<span class="t" style="left:123.50px;top:491.93px;font-size:11.5px;transform:scaleX(0.8517);">PLC_PRG (PRG)</span>
<span class="t" style="left:123.50px;top:511.02px;font-size:11.5px;transform:scaleX(0.8675);">PLC_PRG_Alarms (PRG)</span>
<span class="t" style="left:123.50px;top:530.11px;font-size:11.5px;transform:scaleX(0.8592);">PRG_Visu (PRG)</span>
<span class="t" style="left:123.50px;top:549.20px;font-size:11.5px;transform:scaleX(0.9554);">Task Configuration</span>
<span class="t" style="left:123.50px;top:568.29px;font-size:11.5px;transform:scaleX(0.9154);">Visualization Manager</span>
<span class="t" style="left:83.30px;top:587.38px;font-size:11.5px;transform:scaleX(0.9337);">PLC_Manager (70.0000)</span>
<span class="t" style="left:83.30px;top:606.47px;font-size:11.5px;transform:scaleX(0.9645);">Observer (705003)</span>
<span class="t" style="left:83.30px;top:625.56px;font-size:11.5px;transform:scaleX(0.9423);">Systembus (705000)</span>
<span class="t" style="left:103.30px;top:644.65px;font-size:11.5px;transform:scaleX(0.9355);">ROU03_4 (705042)</span>
<span class="t" style="left:123.50px;top:663.74px;font-size:11.5px;transform:scaleX(0.9271);">REL04_5 (705015)</span>
<span class="t" style="left:123.50px;top:682.83px;font-size:11.5px;transform:scaleX(0.9587);">AIN04_6 (705020)</span>
<span class="t" style="left:513.50px;top:531.77px;font-size:33px;transform:scaleX(1.0783);color:#fff;-webkit-text-stroke:0;">No more controller</span>
<span class="t" style="left:459.50px;top:577.07px;font-size:33px;transform:scaleX(1.0400);color:#fff;-webkit-text-stroke:0;">module in the system bus.</span>
</div>
</body>
</html>
